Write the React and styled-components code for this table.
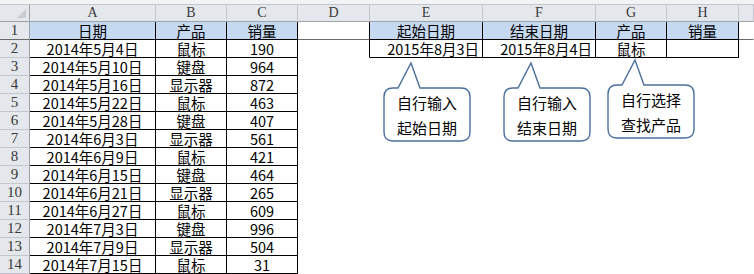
import React from "react";
import styled, { createGlobalStyle } from "styled-components";

const GlobalStyle = createGlobalStyle`
  html, body {
    margin: 0;
    padding: 0;
    background: #ffffff;
  }
`;

const BLUE = "#c5d9f1";
const HEAD_BG = "#e4e7eb";
const HEAD_LINE = "#c3c7cd";
const HEAD_EDGE = "#9da2a8";
const FREEZE = "#6b6b6b";

const rows = [
  ["2014年5月4日", "鼠标", "190"],
  ["2014年5月10日", "键盘", "964"],
  ["2014年5月16日", "显示器", "872"],
  ["2014年5月22日", "鼠标", "463"],
  ["2014年5月28日", "键盘", "407"],
  ["2014年6月3日", "显示器", "561"],
  ["2014年6月9日", "鼠标", "421"],
  ["2014年6月15日", "键盘", "464"],
  ["2014年6月21日", "显示器", "265"],
  ["2014年6月27日", "鼠标", "609"],
  ["2014年7月3日", "键盘", "996"],
  ["2014年7月9日", "显示器", "504"],
  ["2014年7月15日", "鼠标", "31"],
];

const letters = ["A", "B", "C", "D", "E", "F", "G", "H", ""];

const Page = styled.div`
  position: relative;
  width: 754px;
  height: 274px;
  overflow: hidden;
  background: #ffffff;
`;

const TopStrip = styled.div`
  height: 4px;
  background: #f2f3f5;
  border-bottom: 1px solid ${HEAD_LINE};
`;

const Sheet = styled.div`
  display: grid;
  grid-template-columns: 30px 126px 71px 71px 72px 113px 113px 71px 72px 1fr;
  grid-template-rows: 17px;
  grid-auto-rows: 18px;
`;

const Corner = styled.div`
  position: relative;
  box-sizing: border-box;
  background: ${HEAD_BG};
  border-right: 1px solid ${HEAD_EDGE};
  border-bottom: 1px solid ${HEAD_EDGE};

  &::after {
    content: "";
    position: absolute;
    right: 3px;
    bottom: 3px;
    width: 0;
    height: 0;
    border-left: 9px solid transparent;
    border-bottom: 9px solid #c9ccd1;
  }
`;

const ColHead = styled.div`
  box-sizing: border-box;
  background: ${HEAD_BG};
  border-right: 1px solid ${HEAD_LINE};
  border-bottom: 1px solid ${HEAD_EDGE};
  font-family: "Liberation Serif", serif;
  font-size: 14px;
  line-height: 16px;
  color: #3a3a3a;
  text-align: center;
`;

const RowHead = styled.div`
  box-sizing: border-box;
  background: ${HEAD_BG};
  border-right: 1px solid ${HEAD_EDGE};
  border-bottom: 1px solid ${(p) => (p.$frozen ? FREEZE : HEAD_LINE)};
  font-family: "Liberation Serif", serif;
  font-size: 15px;
  line-height: 17px;
  color: #3a3a3a;
  text-align: center;
`;

const Cell = styled.div`
  box-sizing: border-box;
  background: ${(p) => p.$bg || "#ffffff"};
  border-right: 1px solid ${(p) => p.$right || "transparent"};
  border-bottom: 1px solid ${(p) => p.$bottom || "transparent"};
  padding: 0 3px;
  font-family: "Noto Sans CJK SC", sans-serif;
  font-size: 14.5px;
  line-height: 17px;
  color: #000000;
  text-align: ${(p) => p.$align || "center"};
  white-space: nowrap;
`;

const Bubble = styled.div`
  position: absolute;
  left: ${(p) => p.$x}px;
  top: ${(p) => p.$y}px;
  width: 88px;
  height: 81px;
`;

const BubbleShape = styled.svg`
  position: absolute;
  left: 0;
  top: 0;
  overflow: visible;
`;

const BubbleText = styled.div`
  position: absolute;
  left: 1px;
  top: 27px;
  width: 86px;
  height: 52px;
  display: flex;
  flex-direction: column;
  align-items: center;
  justify-content: center;
  font-family: "Noto Sans CJK SC", sans-serif;
  font-size: 15px;
  line-height: 25px;
  color: #000000;
`;

const bubblePath =
  "M10 26 L15 26 L28 1 L37 26 L78 26 Q87 26 87 35 L87 70 Q87 79 78 79 L10 79 Q1 79 1 70 L1 35 Q1 26 10 26 Z";

function Callout({ x, y, lines }) {
  return (
    <Bubble $x={x} $y={y}>
      <BubbleShape width="88" height="81" viewBox="0 0 88 81">
        <path d={bubblePath} fill="#ffffff" stroke="#4a6f9c" strokeWidth="1.4" />
      </BubbleShape>
      <BubbleText>
        {lines.map((l) => (
          <span key={l}>{l}</span>
        ))}
      </BubbleText>
    </Bubble>
  );
}

function SheetRow({ n, data, extra }) {
  const first = n === 1;
  const black = "#000000";
  return (
    <>
      <RowHead $frozen={first}>{n}</RowHead>
      {data.map((v, i) => (
        <Cell key={i} $bg={first ? BLUE : undefined} $right={black} $bottom={black}>
          {v}
        </Cell>
      ))}
      <Cell $right={n <= 2 ? black : undefined} $bottom={first ? FREEZE : undefined} />
      {extra
        ? extra.map((c, i) => (
            <Cell
              key={"e" + i}
              $bg={first ? BLUE : undefined}
              $right={black}
              $bottom={black}
              $align={c.align}
            >
              {c.text}
            </Cell>
          ))
        : [0, 1, 2, 3].map((i) => <Cell key={"e" + i} />)}
      <Cell $bottom={first ? FREEZE : undefined} />
    </>
  );
}

export default function App() {
  return (
    <Page>
      <GlobalStyle />
      <TopStrip />
      <Sheet>
        <Corner />
        {letters.map((l, i) => (
          <ColHead key={i}>{l}</ColHead>
        ))}
        <SheetRow
          n={1}
          data={["日期", "产品", "销量"]}
          extra={[
            { text: "起始日期" },
            { text: "结束日期" },
            { text: "产品" },
            { text: "销量" },
          ]}
        />
        {rows.map((r, i) => (
          <SheetRow
            key={i}
            n={i + 2}
            data={r}
            extra={
              i === 0
                ? [
                    { text: "2015年8月3日", align: "right" },
                    { text: "2015年8月4日", align: "right" },
                    { text: "鼠标" },
                    { text: "" },
                  ]
                : null
            }
          />
        ))}
      </Sheet>
      <Callout x={383} y={62} lines={["自行输入", "起始日期"]} />
      <Callout x={503} y={62} lines={["自行输入", "结束日期"]} />
      <Callout x={607} y={59} lines={["自行选择", "查找产品"]} />
    </Page>
  );
}
